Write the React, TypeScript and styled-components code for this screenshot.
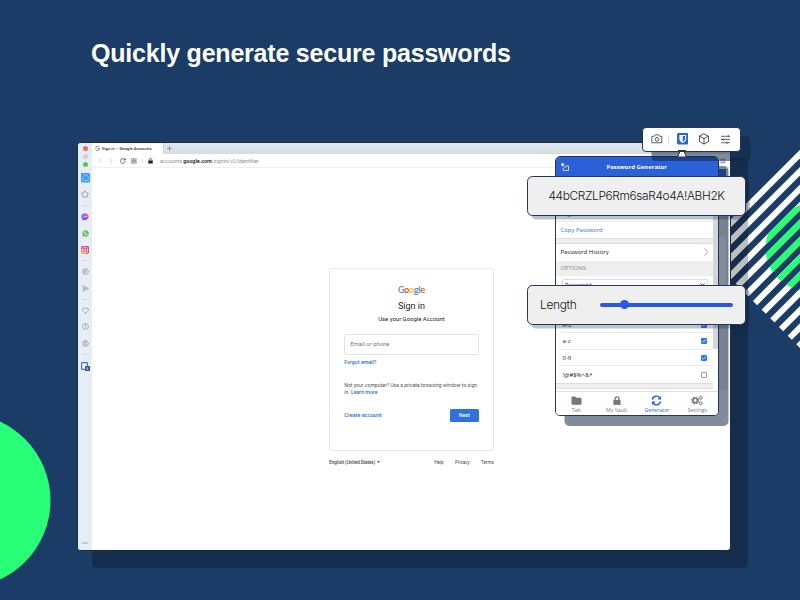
import React from "react";
import styled, { createGlobalStyle } from "styled-components";

const GlobalStyle = createGlobalStyle`
  html, body { margin: 0; padding: 0; background: #1b3c66; }
  * { box-sizing: border-box; }
`;

const Slide = styled.main`
  position: relative;
  width: 800px;
  height: 600px;
  overflow: hidden;
  background: #1b3c66;
  font-family: Roboto, sans-serif;
  white-space: nowrap;
`;

const Decoration = styled.svg`
  position: absolute;
  inset: 0;
`;

const Title = styled.h1`
  position: relative;
  margin: 0;
  padding: 37px 0 0 91px;
  height: 142px;
  font: bold 25px/33px "Liberation Sans", Arial, sans-serif;
  letter-spacing: -0.21px;
  color: #fff;
`;

/* Browser window */

const BrowserWindow = styled.section`
  position: relative;
  display: flex;
  width: 654px;
  height: 408.5px;
  margin-left: 77px;
  border: 1px solid #1a2b42;
  border-radius: 4px;
  overflow: hidden;
  background: #fff;
`;

const WindowShade = styled.div`
  position: absolute;
  left: 92px;
  top: 157px;
  width: 656px;
  height: 411px;
  border-radius: 5px;
  background: rgba(0, 0, 0, 0.25);
`;

const Sidebar = styled.nav`
  display: flex;
  flex-direction: column;
  width: 14px;
  padding: 1px 0 0;
  background: #e6edf4;
`;

const Slot = styled.div<{ $h: number; $last?: boolean }>`
  display: flex;
  flex: none;
  align-items: center;
  justify-content: center;
  height: ${(p) => p.$h}px;
  margin-top: ${(p) => (p.$last ? "auto" : 0)};
`;

const Dot = styled.i<{ $color: string }>`
  width: 5px;
  height: 5px;
  border-radius: 50%;
  background: ${(p) => p.$color};
`;

const Dash = styled.i`
  width: 4px;
  height: 1px;
  background: #ccd3da;
`;

const Main = styled.div`
  display: flex;
  flex: 1;
  flex-direction: column;
`;

const TabStrip = styled.div`
  display: flex;
  height: 11px;
  background: linear-gradient(#e0e7ed, #d4dde4);
`;

const Tab = styled.div`
  display: flex;
  align-items: center;
  gap: 2px;
  width: 72px;
  padding-left: 3px;
  border-right: 1px solid #cdd5dc;
  background: #fff;
  font: 500 4.2px/11px Roboto, sans-serif;
  color: #333;
`;

const NewTab = styled.div`
  display: flex;
  align-items: center;
  padding-left: 3px;
`;

const AddressBar = styled.div`
  display: flex;
  align-items: center;
  height: 14px;
  padding: 0 4px 0 4.5px;
  border-bottom: 1px solid #eef0f2;
  background: #fff;
`;

const Tools = styled.div`
  display: flex;
  align-items: center;
  gap: 5.5px;
  width: 63.5px;
`;

const ToolRule = styled.i`
  width: 1px;
  height: 5px;
  margin-left: -1px;
  background: #e2e2e2;
`;

const Url = styled.span`
  font-size: 5.4px;
  letter-spacing: -0.03px;
  color: #8a929a;
  b { font-weight: 600; color: #222; }
`;

const Content = styled.div`
  display: flex;
  flex-direction: column;
  align-items: center;
  padding: 99.5px 0 0;
`;

const SignInColumn = styled.div`
  width: 164.5px;
  margin-left: 1px;
`;

/* Google sign-in */

const SignInCard = styled.div`
  display: flex;
  flex-direction: column;
  height: 183px;
  padding: 16px 14px 0;
  border: 1px solid #e6e6e6;
  border-radius: 3px;
`;

const GoogleLogo = styled.div`
  text-align: center;
  font: 8.7px/9px Lato, sans-serif;
  letter-spacing: -0.05px;
`;

const Letter = styled.span<{ $c: string }>`
  color: ${(p) => p.$c};
  -webkit-text-stroke: 0.2px ${(p) => p.$c};
`;

const SignIn = styled.div`
  margin-top: 6px;
  text-align: center;
  font-size: 9px;
  line-height: 12px;
  color: #202124;
`;

const UseAccount = styled.div`
  margin-top: 3px;
  text-align: center;
  font-size: 5.95px;
  line-height: 8px;
  color: #202124;
`;

const EmailInput = styled.div`
  height: 21px;
  margin-top: 11.5px;
  padding-left: 5px;
  border: 1px solid #e3e3e3;
  border-radius: 2px;
  font-size: 5.8px;
  line-height: 19.5px;
  letter-spacing: 0.05px;
  color: #777;
`;

const Link = styled.span`
  font-size: 5.25px;
  line-height: 7px;
  font-weight: 500;
  color: #2a6fe0;
`;

const Forgot = styled(Link)`
  margin-top: 3.5px;
`;

const CreateLink = styled(Link)`
  font-size: 5.5px;
`;

const PrivateNote = styled.p`
  margin: 16.5px 0 0;
  font-size: 5.15px;
  line-height: 7px;
  letter-spacing: -0.02px;
  color: #555;
`;

const Actions = styled.div`
  display: flex;
  align-items: center;
  justify-content: space-between;
  margin-top: 12.5px;
`;

const NextButton = styled.div`
  width: 29px;
  height: 13px;
  border-radius: 1.5px;
  background: #3171dd;
  text-align: center;
  font-size: 5.2px;
  line-height: 13px;
  font-weight: 500;
  color: #fff;
`;

const Footer = styled.div`
  display: flex;
  align-items: center;
  gap: 11.5px;
  margin-top: 8px;
  font-size: 4.5px;
  line-height: 7px;
  color: #444;
`;

const Language = styled.span`
  flex: 1;
  font-weight: 500;
`;

const Ghost = styled.div`
  position: absolute;
  left: 639px;
  top: 26px;
  width: 11px;
  height: 221px;
  border-right: 2px solid #e4e6ea;
  background: linear-gradient(#2b61d8 0 14px, #e9ebee 14px 68px, #fff 68px 122px, #e9ebee 122px);
`;

const PageTools = styled.div`
  position: absolute;
  left: 642px;
  top: 15px;
  display: flex;
`;

/* Bitwarden popup */

const Popup = styled.section`
  position: absolute;
  left: 555px;
  top: 156px;
  display: flex;
  flex-direction: column;
  width: 163.5px;
  height: 260px;
  border: 1px solid #20375a;
  border-width: 1px 1px 1.5px;
  border-radius: 5px;
  background: #fff;
  box-shadow: 9.5px 10px 0 rgba(16, 37, 66, 0.53);
  font-family: "Open Sans", sans-serif;
  overflow: hidden;
`;

const PopupHeader = styled.header`
  display: flex;
  flex: none;
  align-items: center;
  height: 20px;
  padding: 0 5px;
  background: #2b61d8;
`;

const PopupTitle = styled.span`
  flex: 1;
  padding-right: 9px;
  text-align: center;
  font-size: 5.9px;
  font-weight: 700;
  letter-spacing: 0.03px;
  color: #fff;
`;

const PopupBody = styled.div`
  display: flex;
  flex: 1;
  min-height: 0;
`;

const PopupList = styled.div`
  flex: 1;
`;

const ScrollTrack = styled.div`
  width: 4.5px;
  height: 172px;
  background: #d6d6d6;
`;

const Row = styled.div<{ $h: number; $tone?: string; $bg?: string; $line?: boolean }>`
  display: flex;
  align-items: center;
  justify-content: space-between;
  height: ${(p) => p.$h}px;
  padding: 0 3px 0 4.5px;
  background: ${(p) => p.$bg ?? "#fff"};
  border-bottom: ${(p) => (p.$line ? "1px solid #e8e8e8" : "0")};
  font-size: 5.95px;
  line-height: 8px;
  color: ${(p) => p.$tone ?? "#222"};
`;

const OptionRow = styled(Row)`
  margin-left: 4px;
  padding: 0 6px 0 2.5px;
`;

const Divider = styled.div`
  height: 5.5px;
  border: solid #dedede;
  border-width: 1px 0;
  background: #efefef;
`;

const SelectBox = styled.div`
  display: flex;
  align-items: center;
  justify-content: space-between;
  width: 146px;
  height: 12px;
  margin: 2.5px 0 0 6px;
  padding: 0 2px;
  border: 1px solid #ddd;
  border-radius: 2px;
  font-size: 5.9px;
  line-height: 8px;
  color: #222;
`;

const SelectGap = styled.div`
  height: 26.5px;
`;

const Check = styled.span<{ $on?: boolean }>`
  display: flex;
  width: 6px;
  height: 6px;
  border: ${(p) => (p.$on ? "0" : "0.75px solid #999")};
  border-radius: 1px;
  background: ${(p) => (p.$on ? "#2878f0" : "#fff")};
`;

const BottomNav = styled.nav`
  position: relative;
  display: grid;
  flex: none;
  grid-template-columns: repeat(4, 1fr);
  height: 24px;
  border-top: 1px solid #e0e0e0;
  background: #fff;
`;

const NavItem = styled.div<{ $active?: boolean }>`
  display: flex;
  flex-direction: column;
  align-items: center;
  padding-top: 2.5px;
  color: ${(p) => (p.$active ? "#2762d8" : "#777")};
  font-size: 5.2px;
  line-height: 7px;
  svg { height: 11px; margin-bottom: 1px; }
`;

/* Magnified cards */

const Callout = styled.div<{ $top: number }>`
  position: absolute;
  left: 527px;
  top: ${(p) => p.$top}px;
  display: flex;
  align-items: center;
  width: 219px;
  height: 39.5px;
  border: 1px solid #22385a;
  border-bottom-width: 1.5px;
  border-radius: 5.5px;
  background: #efefef;
  box-shadow: 4px 3.5px 0 rgba(16, 37, 66, 0.28);
  font-family: Inter, "Liberation Sans", sans-serif;
  font-weight: 300;
  color: #151515;
`;

const Password = styled.span`
  padding: 0 0 1px 20.5px;
  font-size: 11.9px;
  letter-spacing: -0.36px;
`;

const LengthLabel = styled.span`
  width: 72px;
  padding-left: 12px;
  font-size: 12px;
  letter-spacing: -0.35px;
`;

const Slider = styled.div`
  display: flex;
  align-items: center;
  width: 133px;
  height: 4px;
  padding-left: 20px;
  border-radius: 2px;
  background: #2959e0;
`;

const Thumb = styled.i`
  width: 9.4px;
  height: 9.4px;
  border-radius: 50%;
  background: #2959e0;
`;

const ToolCard = styled.div`
  position: absolute;
  left: 642px;
  top: 126.5px;
  display: flex;
  align-items: center;
  width: 98.5px;
  height: 25px;
  padding-left: 8px;
  border: 0.75px solid #22344f;
  border-radius: 4px;
  background: #fff;
  box-shadow: 9.5px 9px 0 rgba(16, 37, 66, 0.53);
`;

const ToolGroup = styled.div<{ $w: number }>`
  display: flex;
  align-items: center;
  width: ${(p) => p.$w}px;
`;

const Separator = styled.i`
  width: 1px;
  height: 9px;
  margin-left: 5px;
  background: #ddd;
`;

const Pointer = styled.svg`
  position: absolute;
  left: 675.5px;
  top: 150px;
`;

const Line = ({ d, size = 8, vb = 24, w = 2, color = "#78818a", fill = "none" }: {
  d: string; size?: number; vb?: number; w?: number; color?: string; fill?: string;
}) => (
  <svg width={size} height={size} viewBox={`0 0 ${vb} ${vb}`} fill={fill} stroke={color}
    strokeWidth={w} strokeLinecap="round" strokeLinejoin="round">
    <path d={d} />
  </svg>
);

const stripes = Array.from({ length: 12 }, (_, k) => 954 + 17.35 * k);

const Stripes = () => (
  <>
    {stripes.map((s) => {
      const x = (s + 452) / 2;
      return <line key={s} x1={x} y1={s - x} x2={840} y2={s - 840} />;
    })}
  </>
);

const Shield = ({ size }: { size: number }) => (
  <svg width={size} height={size} viewBox="0 0 24 24">
    <rect width="24" height="24" rx="3" fill="#2c64da" />
    <path d="M5 4h14v8.500c0 4-3.500 6.500-7 8.500-3.500-2-7-4.500-7-8.500z" fill="#fff" />
    <path d="M12 6.200h4.700v6.300c0 2.600-2 4.200-4.700 5.900z" fill="#2c64da" />
  </svg>
);

export default function App() {
  return (
    <>
      <GlobalStyle />
      <Slide>
        <Decoration width="800" height="600" viewBox="0 0 800 600">
          <defs>
            <clipPath id="disc"><circle cx="809" cy="248" r="43.500" /></clipPath>
          </defs>
          <circle cx="-36.500" cy="500.500" r="87" fill="#29ff76" />
          <g stroke="#fff" strokeWidth="6"><Stripes /></g>
          <g stroke="#29ff76" strokeWidth="6.200" clipPath="url(#disc)"><Stripes /></g>
        </Decoration>
        <WindowShade />
        <Title>Quickly generate secure passwords</Title>

        <BrowserWindow>
          <Sidebar>
            <Slot $h={8}><Dot $color="#ee6a5f" /></Slot>
            <Slot $h={8}><Dot $color="#cfcfcf" /></Slot>
            <Slot $h={8}><Dot $color="#5fc751" /></Slot>
            <Slot $h={20}>
              <svg width="9" height="9.500" viewBox="0 0 18 19">
                <rect width="18" height="19" rx="2" fill="#3f9bf7" />
                <path d="M3.500 15V8.500Q4 4 9 3.500 14 4 14.500 8.500V15z" fill="none" stroke="#a9d5ff" strokeWidth="1.400" />
              </svg>
            </Slot>
            <Slot $h={12}><Line size={8} d="M12 3l4 5 6 2-3 5v6H5v-6l-3-5 6-2z" /></Slot>
            <Slot $h={10}><Dash /></Slot>
            <Slot $h={13}>
              <svg width="8" height="8" viewBox="0 0 24 24">
                <defs>
                  <linearGradient id="msg" x1="0" y1="1" x2="1" y2="0">
                    <stop offset="0" stopColor="#2a73ff" /><stop offset=".5" stopColor="#9a4dff" /><stop offset="1" stopColor="#ff6a70" />
                  </linearGradient>
                </defs>
                <path d="M12 1C5.500 1 1 5.500 1 11.500c0 3.500 1.500 6 4 8V23l3.500-2c8 2 14.500-3 14.500-9.500C23 5.500 18.500 1 12 1z" fill="url(#msg)" />
                <path d="M5 14l5-5 3.500 3L19 9" fill="none" stroke="#fff" strokeWidth="2.500" />
              </svg>
            </Slot>
            <Slot $h={20}>
              <svg width="7" height="7" viewBox="0 0 24 24">
                <path d="M12 1a11 11 0 1 1-5 20.500L1 23l1.500-6A11 11 0 0 1 12 1z" fill="#62c462" />
                <path d="M7 7c0 5 5 10 10 10l1-3-4-1-1 1-3-3 1-2-2-3z" fill="#fff" />
              </svg>
            </Slot>
            <Slot $h={13}>
              <svg width="8" height="8" viewBox="0 0 24 24">
                <defs>
                  <linearGradient id="ig" x1=".2" y1="1" x2=".8" y2="0">
                    <stop offset="0" stopColor="#fbb040" /><stop offset=".5" stopColor="#e8405a" /><stop offset="1" stopColor="#9a3fc4" />
                  </linearGradient>
                </defs>
                <rect width="24" height="24" rx="5" fill="url(#ig)" />
                <g fill="none" stroke="#fff" strokeWidth="2"><rect x="4" y="4" width="16" height="16" rx="4" /><circle cx="12" cy="12" r="3.800" /></g>
              </svg>
            </Slot>
            <Slot $h={9}><Dash /></Slot>
            <Slot $h={13}><Line size={7} d="M12 2a10 10 0 1 0 0 20a10 10 0 1 0 0-20M9 8l7 4-7 4z" /></Slot>
            <Slot $h={20}><Line size={7} d="M3 3l19 9-19 9 4-9zM7 12h6" /></Slot>
            <Slot $h={2}><Dash /></Slot>
            <Slot $h={20}><Line size={7} d="M12 21C5 17 2 13 2 8c0-5 7-6 10-2 3-4 10-3 10 2 0 5-3 9-10 13z" /></Slot>
            <Slot $h={13}><Line size={7} d="M12 2a10 10 0 1 0 0 20a10 10 0 1 0 0-20M12 7v6l3 2" /></Slot>
            <Slot $h={20}><Line size={7} d="M9 2h6l1 3 4 1 2 6-2 6-4 1-1 3H9l-1-3-4-1-2-6 2-6 4-1zM12 8a4 4 0 1 0 0 8a4 4 0 1 0 0-8" /></Slot>
            <Slot $h={2}><Dash /></Slot>
            <Slot $h={22}>
              <svg width="9" height="9" viewBox="0 0 27 27">
                <rect x="2" y="2" width="17" height="20" rx="2" fill="#f4f7fb" stroke="#3a70dc" strokeWidth="3.500" />
                <rect x="12" y="12" width="15" height="15" rx="2" fill="#3e5368" />
                <path d="M16 16h6v7h-6z" fill="#a9b8c6" />
              </svg>
            </Slot>
            <Slot $h={13} $last>
              <svg width="6" height="2" viewBox="0 0 6 2" fill="#8b939c"><circle cx="1" cy="1" r=".7" /><circle cx="3" cy="1" r=".7" /><circle cx="5" cy="1" r=".7" /></svg>
            </Slot>
          </Sidebar>

          <Main>
            <TabStrip>
              <Tab>
                <svg width="5" height="5" viewBox="0 0 24 24" fill="none" strokeWidth="4.500">
                  <path d="M19 5A10 10 0 0 0 3.500 7" stroke="#ea4335" />
                  <path d="M3.500 7a10 10 0 0 0 0 10" stroke="#fbbc05" />
                  <path d="M3.500 17A10 10 0 0 0 18.500 19" stroke="#34a853" />
                  <path d="M18.500 19A10 10 0 0 0 22 12H12" stroke="#4285f4" />
                </svg>
                Sign in – Google Accounts
              </Tab>
              <NewTab><Line size={5} w={2.500} d="M12 2v20M2 12h20" color="#666" /></NewTab>
            </TabStrip>
            <AddressBar>
              <Tools>
                <Line size={6} d="M15 4l-8 8 8 8" color="#aaa" />
                <Line size={6} d="M9 4l8 8-8 8" color="#aaa" />
                <Line size={6} w={2.800} d="M20 7a10 10 0 1 0 1 8M21 2v6h-6" color="#444" />
                <Line size={6} w={2.400} d="M3 3h7v7H3zM14 3h7v7h-7zM3 14h7v7H3zM14 14h7v7h-7z" color="#666" />
                <ToolRule />
                <svg width="5" height="6" viewBox="0 0 20 24"><path d="M1 10h18v12H1z" fill="#222" /><path d="M5 10V7a5 5 0 0 1 10 0v3" fill="none" stroke="#222" strokeWidth="2.500" /></svg>
              </Tools>
              <Url>accounts.<b>google.com</b>/signin/v2/identifier</Url>
            </AddressBar>
            <Content>
              <SignInColumn>
                <SignInCard>
                  <GoogleLogo>
                    <Letter $c="#4285f4">G</Letter><Letter $c="#ea4335">o</Letter><Letter $c="#fbbc05">o</Letter><Letter $c="#4285f4">g</Letter><Letter $c="#34a853">l</Letter><Letter $c="#ea4335">e</Letter>
                  </GoogleLogo>
                  <SignIn>Sign in</SignIn>
                  <UseAccount>Use your Google Account</UseAccount>
                  <EmailInput>Email or phone</EmailInput>
                  <Forgot>Forgot email?</Forgot>
                  <PrivateNote>
                    Not your computer? Use a private browsing window to sign<br />
                    in. <Link>Learn more</Link>
                  </PrivateNote>
                  <Actions>
                    <CreateLink>Create account</CreateLink>
                    <NextButton>Next</NextButton>
                  </Actions>
                </SignInCard>
                <Footer>
                  <Language>English (United States) &nbsp;<svg width="3" height="2.500" viewBox="0 0 6 4"><path d="M0 0h6L3 3.500z" fill="#444" /></svg></Language>
                  <span>Help</span><span>Privacy</span><span>Terms</span>
                </Footer>
              </SignInColumn>
            </Content>
          </Main>
          <PageTools><Line size={6} w={3} d="M3 5h18M3 12h7M14 12h7M3 19h18" color="#666" /></PageTools>
          <Ghost />
        </BrowserWindow>

        <Popup>
          <PopupHeader>
            <svg width="9" height="9" viewBox="0 0 24 24" fill="none" stroke="#fff" strokeWidth="2">
              <path d="M12 8h8v12H6v-8" /><path d="M4 4l9 9" /><path d="M2 8V2h6z" fill="#fff" />
            </svg>
            <PopupTitle>Password Generator</PopupTitle>
          </PopupHeader>
          <PopupBody>
            <PopupList>
              <Row $h={29} $bg="#efefef" />
              <Row $h={16} $tone="#3370db" $line>Regenerate Password</Row>
              <Row $h={16} $tone="#3370db">Copy Password</Row>
              <Divider />
              <Row $h={17}>
                Password History
                <Line size={8} w={3} d="M8 2l9 10-9 10" color="#aaa" />
              </Row>
              <Row $h={15.500} $bg="#efefef" $tone="#888">OPTIONS</Row>
              <SelectBox>Password<Line size={5} w={4} d="M4 8l8 8 8-8" color="#222" /></SelectBox>
              <SelectGap />
              <OptionRow $h={16} $line>A-Z<Check $on><Line size={6} w={3} d="M5 12l5 5 9-10" color="#fff" /></Check></OptionRow>
              <OptionRow $h={16.700} $line>a-z<Check $on><Line size={6} w={3} d="M5 12l5 5 9-10" color="#fff" /></Check></OptionRow>
              <OptionRow $h={16.700} $line>0-9<Check $on><Line size={6} w={3} d="M5 12l5 5 9-10" color="#fff" /></Check></OptionRow>
              <OptionRow $h={17}>!@#$%^&amp;*<Check /></OptionRow>
              <Divider />
            </PopupList>
            <ScrollTrack />
          </PopupBody>
          <BottomNav>
            <NavItem>
              <svg width="11" height="11" viewBox="0 0 24 24"><path d="M1 5q0-2 2-2h6l3 3h9q2 0 2 2v11q0 2-2 2H3q-2 0-2-2z" fill="currentColor" /></svg>
              Tab
            </NavItem>
            <NavItem>
              <svg width="10" height="11" viewBox="0 0 24 24"><path d="M4 11h16v11H4z" fill="currentColor" stroke="currentColor" strokeLinejoin="round" /><path d="M7.500 11V7.500a4.500 4.500 0 0 1 9 0V11" fill="none" stroke="currentColor" strokeWidth="3" /></svg>
              My Vault
            </NavItem>
            <NavItem $active>
              <svg width="11" height="11" viewBox="0 0 24 24"><path d="M3 10a9 9 0 0 1 16-4M21 14a9 9 0 0 1-16 4" fill="none" stroke="currentColor" strokeWidth="3.200" /><path d="M22 2v8h-8zM2 22v-8h8z" fill="currentColor" /></svg>
              Generator
            </NavItem>
            <NavItem>
              <svg width="12" height="11" viewBox="0 0 26 24" fill="none" stroke="currentColor">
                <circle cx="9" cy="12" r="5" strokeWidth="3.500" /><circle cx="9" cy="12" r="7.500" strokeWidth="2.200" strokeDasharray="3.300 2.600" />
                <circle cx="21" cy="6" r="2.600" strokeWidth="2" /><circle cx="21" cy="6" r="4.300" strokeWidth="1.200" strokeDasharray="2 1.400" />
                <circle cx="21" cy="18" r="2.600" strokeWidth="2" /><circle cx="21" cy="18" r="4.300" strokeWidth="1.200" strokeDasharray="2 1.400" />
              </svg>
              Settings
            </NavItem>
          </BottomNav>
        </Popup>

        <ToolCard>
          <ToolGroup $w={25.500}>
            <Line size={12} w={1.800} color="#4a4f55" d="M2.500 6.500h4.500l2-3h6l2 3h4.500v13h-19zM12 9a3.700 3.700 0 1 0 0 7.400a3.700 3.700 0 1 0 0-7.400" />
            <Separator />
          </ToolGroup>
          <ToolGroup $w={21}><Shield size={11.500} /></ToolGroup>
          <ToolGroup $w={22.500}>
            <Line size={12} w={1.800} color="#3c4146" d="M12 2l9 4.500v10.500L12 22l-9-5V6.500zM3 6.500l9 4.500 9-4.500M12 11v11" />
          </ToolGroup>
          <Line size={11} w={1.800} color="#4a4f55" d="M3 5h18M3 12h18M3 19h18M18 3v4M7 10v4M15 17v4" />
        </ToolCard>
        <Pointer width="12" height="7" viewBox="0 0 12 7">
          <path d="M1.500 7L4 1.500h4L10.500 7z" fill="#fff" stroke="#222" strokeWidth="1" />
          <path d="M2 0h8v1.500H2z" fill="#22344f" />
        </Pointer>

        <Callout $top={176}><Password>44bCRZLP6Rm6saR4o4A!ABH2K</Password></Callout>
        <Callout $top={285}>
          <LengthLabel>Length</LengthLabel>
          <Slider><Thumb /></Slider>
        </Callout>
      </Slide>
    </>
  );
}
